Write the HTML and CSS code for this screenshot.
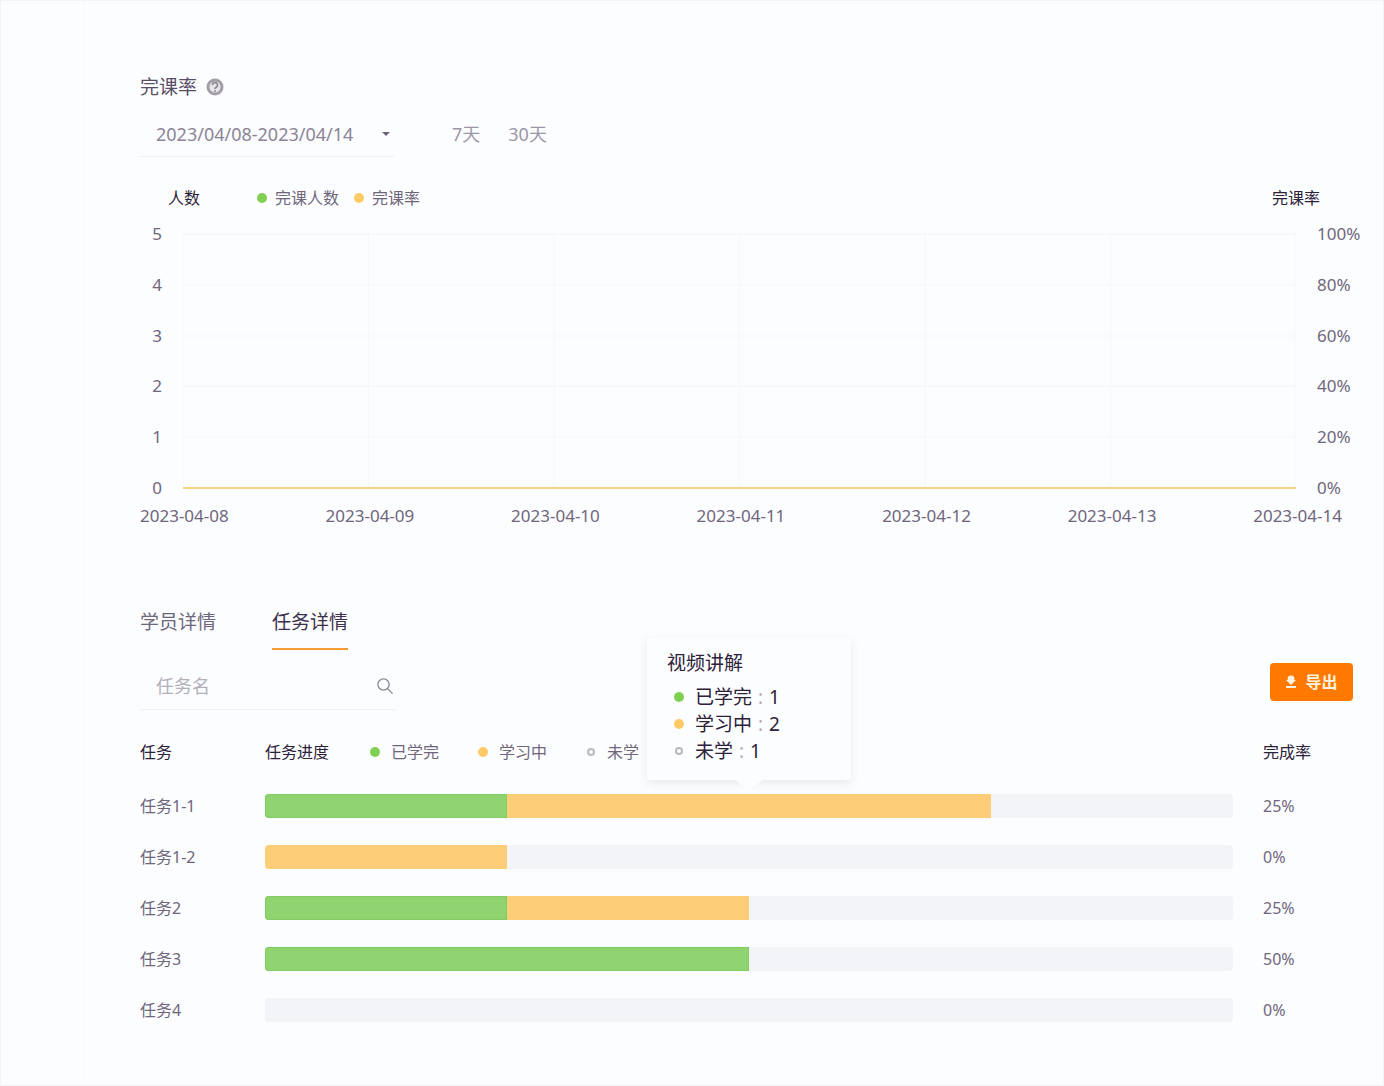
FILE: index.html
```html
<!DOCTYPE html>
<html lang="zh-CN">
<head>
    <meta charset="UTF-8">
    <meta name="viewport" content="width=device-width, initial-scale=1.0">
    <title>完课率</title>
    <link rel="stylesheet" href="styles.css">
</head>
<body>
    <div class="sidebar"></div>
    <main class="content">
        <div class="title">
            <h1>完课率</h1>
            <svg class="help" viewBox="0 0 18 18" width="18" height="18">
                <circle cx="9" cy="9" r="7" fill="#e9e6ea" stroke="#a39da8" stroke-width="3"/>
                <path d="M6.5 7.2a2.5 2.5 0 1 1 3.7 2.1c-.8.5-1.2.8-1.2 1.6" fill="none" stroke="#8d8692" stroke-width="1.6"/>
                <circle cx="9" cy="13" r="1" fill="#8d8692"/>
            </svg>
        </div>

        <div class="filters">
            <button class="date-picker">
                <span>2023/04/08-2023/04/14</span>
                <svg viewBox="0 0 8 4" width="8" height="4"><path d="M0 0h8L4 4z" fill="#6b6375"/></svg>
            </button>
            <button class="range">7天</button>
            <button class="range">30天</button>
        </div>

        <section class="chart">
            <div class="chart-head">
                <span class="axis-name">人数</span>
                <ul class="legend">
                    <li><i class="dot green"></i>完课人数</li>
                    <li><i class="dot yellow"></i>完课率</li>
                </ul>
                <span class="axis-name right">完课率</span>
            </div>
            <div class="chart-body">
                <div class="y-axis left">
                    <span>5</span><span>4</span><span>3</span><span>2</span><span>1</span><span>0</span>
                </div>
                <svg class="plot" width="100%" height="256">
                    <g stroke="#f5f7fb">
                        <line x1="0" y1="1" x2="100%" y2="1"/>
                        <line x1="0" y1="52" x2="100%" y2="52"/>
                        <line x1="0" y1="103" x2="100%" y2="103"/>
                        <line x1="0" y1="153" x2="100%" y2="153"/>
                        <line x1="0" y1="204" x2="100%" y2="204"/>
                        <line x1="0" y1="0" x2="0" y2="100%"/>
                        <line x1="16.67%" y1="0" x2="16.67%" y2="100%"/>
                        <line x1="33.33%" y1="0" x2="33.33%" y2="100%"/>
                        <line x1="50%" y1="0" x2="50%" y2="100%"/>
                        <line x1="66.67%" y1="0" x2="66.67%" y2="100%"/>
                        <line x1="83.33%" y1="0" x2="83.33%" y2="100%"/>
                        <line x1="100%" y1="0" x2="100%" y2="100%"/>
                    </g>
                    <line x1="0" y1="255" x2="100%" y2="255" stroke="#fbd183" stroke-width="2"/>
                </svg>
                <div class="y-axis">
                    <span>100%</span><span>80%</span><span>60%</span><span>40%</span><span>20%</span><span>0%</span>
                </div>
            </div>
            <div class="x-axis">
                <span>2023-04-08</span>
                <span>2023-04-09</span>
                <span>2023-04-10</span>
                <span>2023-04-11</span>
                <span>2023-04-12</span>
                <span>2023-04-13</span>
                <span>2023-04-14</span>
            </div>
        </section>

        <nav class="tabs">
            <a href="#students">学员详情</a>
            <a href="#tasks" class="active">任务详情</a>
        </nav>

        <div class="toolbar">
            <div class="search">
                <input type="text" placeholder="任务名" aria-label="任务名">
                <svg viewBox="0 0 18 18" width="18" height="18" fill="none" stroke="#8b8494" stroke-width="1.3">
                    <circle cx="7.5" cy="7.5" r="5.6"/>
                    <path d="M11.6 11.6l5 5"/>
                </svg>
            </div>
            <button class="export">
                <svg viewBox="0 0 12 14" width="12" height="14" fill="#fff3df">
                    <path d="M4 1h4v4h3L6 10 1 5h3z"/>
                    <circle cx="6" cy="4" r="3.4"/>
                    <path d="M1 11h10v2H1z"/>
                </svg>
                导出
            </button>
        </div>

        <table class="tasks">
            <thead>
                <tr>
                    <th class="name">任务</th>
                    <th>
                        <div class="progress-head">
                            任务进度
                            <ul class="legend wide">
                                <li><i class="dot green"></i>已学完</li>
                                <li><i class="dot yellow"></i>学习中</li>
                                <li><i class="dot hollow"></i>未学</li>
                            </ul>
                        </div>
                    </th>
                    <th class="rate">完成率</th>
                </tr>
            </thead>
            <tbody>
                <tr>
                    <td>任务1-1</td>
                    <td>
                        <div class="track">
                            <div class="bar done" style="width: 25%"></div>
                            <div class="bar doing" style="width: 50%"></div>
                            <div class="tooltip">
                                <h2>视频讲解</h2>
                                <ul>
                                    <li><i class="dot green"></i>已学完<b>:</b>1</li>
                                    <li><i class="dot yellow"></i>学习中<b>:</b>2</li>
                                    <li><i class="dot hollow"></i>未学<b>:</b>1</li>
                                </ul>
                            </div>
                        </div>
                    </td>
                    <td class="rate">25%</td>
                </tr>
                <tr>
                    <td>任务1-2</td>
                    <td><div class="track"><div class="bar doing" style="width: 25%"></div></div></td>
                    <td class="rate">0%</td>
                </tr>
                <tr>
                    <td>任务2</td>
                    <td>
                        <div class="track">
                            <div class="bar done" style="width: 25%"></div>
                            <div class="bar doing" style="width: 25%"></div>
                        </div>
                    </td>
                    <td class="rate">25%</td>
                </tr>
                <tr>
                    <td>任务3</td>
                    <td><div class="track"><div class="bar done" style="width: 50%"></div></div></td>
                    <td class="rate">50%</td>
                </tr>
                <tr>
                    <td>任务4</td>
                    <td><div class="track"></div></td>
                    <td class="rate">0%</td>
                </tr>
            </tbody>
        </table>
    </main>
</body>
</html>
```
FILE: styles.css
```css
* {
    box-sizing: border-box;
}
body {
    margin: 0;
    display: flex;
    min-height: 100vh;
    background: #fcfdff;
    border: 1px solid #f3f4f7;
    font-family: "Noto Sans", "Noto Sans CJK SC", sans-serif;
    font-size: 16px;
    line-height: 20px;
    color: #6f667c;
}
h1, h2, ul {
    margin: 0;
    padding: 0;
    font-weight: normal;
    list-style: none;
}
button {
    font: inherit;
    color: inherit;
    background: none;
    border: none;
    padding: 0;
    cursor: pointer;
}
.sidebar {
    width: 84px;
    flex-shrink: 0;
    border-right: 1px solid #f9fafd;
}
.content {
    flex: 1;
    min-width: 0;
    padding: 74px 30px 50px 55px;
}

.title {
    display: flex;
    align-items: center;
    gap: 9px;
    height: 24px;
}
.title h1 {
    font-size: 19px;
    color: #584e66;
}

.filters {
    display: flex;
    align-items: center;
    margin-top: 12px;
    font-size: 18px;
    color: #8b8496;
}
.date-picker {
    display: flex;
    align-items: center;
    justify-content: space-between;
    width: 254px;
    height: 46px;
    padding: 0 4px 0 16px;
    margin-right: 58px;
    border-bottom: 1px solid #eff0f5;
}
.range {
    margin-right: 28px;
    color: #9c96a5;
}

.chart {
    margin-top: 30px;
}
.chart-head {
    display: flex;
    align-items: center;
    height: 22px;
    padding: 0 33px 0 28px;
}
.axis-name {
    color: #2c2139;
}
.axis-name.right {
    margin-left: auto;
}
.legend {
    display: flex;
    gap: 15px;
    margin-left: 57px;
}
.legend li {
    display: flex;
    align-items: center;
    gap: 8px;
}
.legend.wide {
    gap: 39px;
    margin-left: 41px;
    font-weight: normal;
    color: #6f667c;
}
.legend.wide li {
    gap: 11px;
}
.dot {
    width: 10px;
    height: 10px;
    flex-shrink: 0;
    border-radius: 50%;
}
.green {
    background: #7fd052;
}
.yellow {
    background: #fdca65;
}
.hollow {
    width: 8px;
    height: 8px;
    margin: 0 1px;
    border: 2px solid #bbb7c0;
}
.chart-body {
    display: grid;
    grid-template-columns: 22px 1fr 36px;
    gap: 21px;
    padding-top: 15px;
    font-size: 17px;
}
.y-axis {
    display: flex;
    flex-direction: column;
    justify-content: space-between;
    height: 274px;
}
.y-axis.left {
    text-align: right;
}
.plot {
    margin-top: 9px;
}
.x-axis {
    display: flex;
    justify-content: space-between;
    margin-top: 8px;
    padding-right: 11px;
    font-size: 17px;
}

.tabs {
    display: flex;
    gap: 56px;
    margin-top: 82px;
    font-size: 19px;
}
.tabs a {
    height: 42px;
    line-height: 28px;
    color: #6f667c;
    text-decoration: none;
}
.tabs .active {
    color: #3c304a;
    border-bottom: 2px solid #f59a35;
}

.toolbar {
    display: flex;
    justify-content: space-between;
    margin-top: 13px;
}
.search {
    display: flex;
    align-items: center;
    width: 256px;
    height: 47px;
    padding: 0 2px 0 16px;
    border-bottom: 1px solid #eff0f5;
}
.search input {
    flex: 1;
    min-width: 0;
    padding: 0;
    border: none;
    outline: none;
    background: none;
    font: inherit;
    font-size: 18px;
    color: #6f667c;
}
.search input::placeholder {
    color: #b3afb9;
}
.export {
    display: flex;
    align-items: center;
    justify-content: center;
    gap: 8px;
    width: 83px;
    height: 38px;
    border-radius: 4px;
    background: #ff7900;
    color: #fff3df;
    font-weight: bold;
}

.tasks {
    width: 100%;
    margin-top: 14px;
    border-collapse: collapse;
    table-layout: fixed;
}
.tasks th, .tasks td {
    padding: 0;
    text-align: left;
}
.tasks th {
    height: 56px;
    font-weight: normal;
    color: #2c2139;
}
.tasks td {
    height: 51px;
}
.tasks .name {
    width: 125px;
}
.tasks .rate {
    width: 120px;
    padding-left: 30px;
}
.progress-head {
    display: flex;
    align-items: center;
}
.track {
    position: relative;
    display: flex;
    height: 24px;
    border-radius: 4px;
    background: #f3f4f8;
}
.bar:first-child {
    border-radius: 4px 0 0 4px;
}
.done {
    background: #90d471;
    box-shadow: inset 0 0 0 1px #82cd62;
}
.doing {
    background: #fecd77;
}

/* hover card above the first bar */
.tooltip {
    position: absolute;
    left: 50%;
    bottom: 38px;
    width: 204px;
    height: 142px;
    padding: 12px 20px;
    transform: translateX(-50%);
    border-radius: 3px;
    background: #fcfdff;
    box-shadow: 0 3px 10px rgba(60, 60, 90, 0.1);
    font-size: 19px;
    line-height: 27px;
    color: #2c2139;
}
.tooltip::after {
    content: "";
    position: absolute;
    left: 50%;
    top: 100%;
    margin-left: -14px;
    border: 14px solid transparent;
    border-top: 10px solid #fcfdff;
    border-bottom: none;
}
.tooltip h2 {
    margin-bottom: 7px;
    font-size: 19px;
}
.tooltip li {
    display: flex;
    align-items: center;
    padding-left: 7px;
}
.tooltip .dot {
    margin-right: 11px;
}
.tooltip .hollow {
    margin: 0 12px 0 1px;
}
.tooltip b {
    width: 17px;
    text-align: center;
    font-weight: normal;
    color: #b3afb9;
}
```
